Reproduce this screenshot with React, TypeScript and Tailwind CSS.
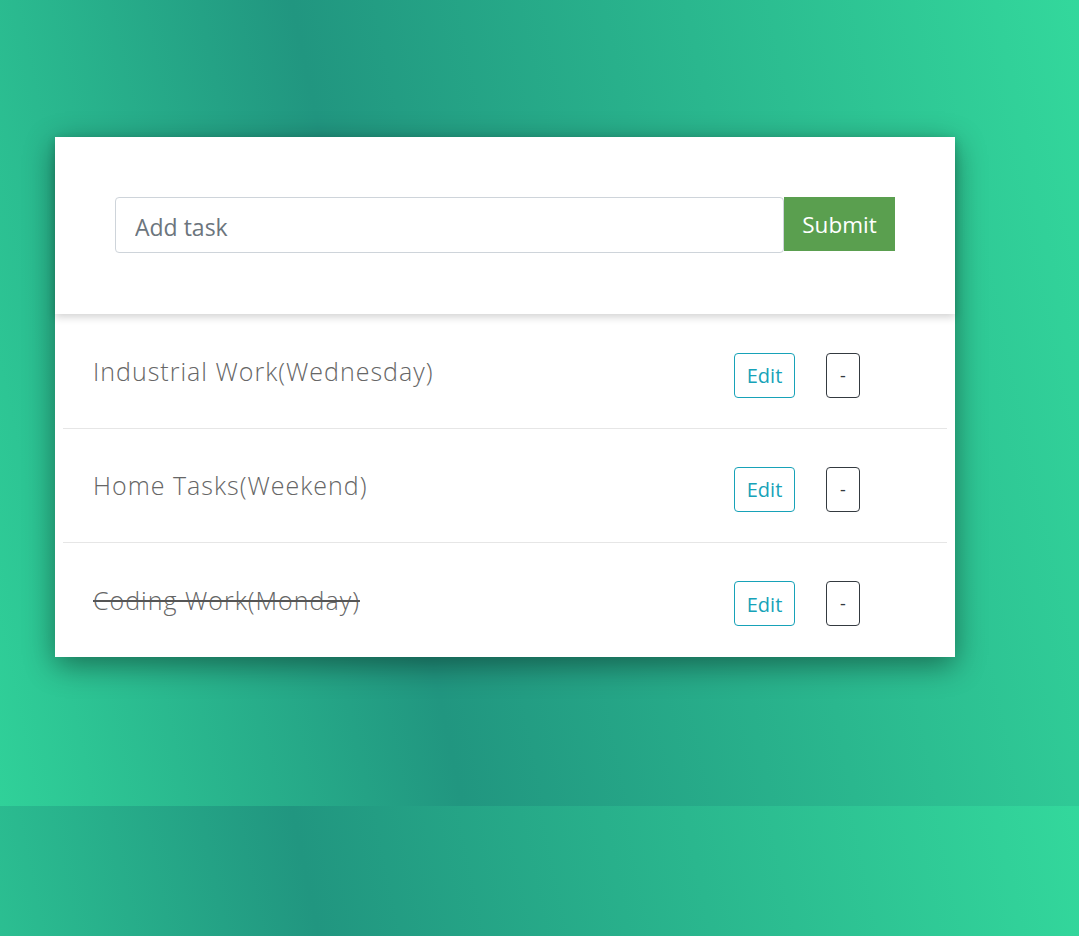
import React, { useState } from 'react';

type Task = { id: number; title: string; done: boolean };

const initialTasks: Task[] = [
  { id: 1, title: 'Industrial Work(Wednesday)', done: false },
  { id: 2, title: 'Home Tasks(Weekend)', done: false },
  { id: 3, title: 'Coding Work(Monday)', done: true },
];

const App = () => {
  const [tasks] = useState<Task[]>(initialTasks);
  const [text, setText] = useState('');

  return (
    <div className="min-h-[936px] w-full bg-[linear-gradient(78deg,#30d199_0%,#219680_37%,#33d89c_100%)] bg-[length:100%_806px] bg-repeat-y pt-[137px] pl-[55px]">
      <div className="w-[900px] bg-white shadow-[0_8px_28px_rgba(0,0,0,0.42)]">
        <div className="relative z-10 flex items-start px-[60px] pt-[60px] pb-[61px] bg-white shadow-[0_3px_8px_rgba(0,0,0,0.18)]">
          <input
            value={text}
            onChange={(e) => setText(e.target.value)}
            placeholder="Add task"
            className="flex-1 h-[56px] pt-[3px] rounded-[4px] border border-[#ced4da] px-[19px] text-[23px] text-[#495057] placeholder:text-[#6c757d] outline-none font-['Open_Sans',sans-serif]"
          />
          <button className="w-[111px] h-[54px] pt-[2px] bg-[#5a9f4f] text-white text-[22.5px] font-['Open_Sans',sans-serif]">
            Submit
          </button>
        </div>
        <ul className="pt-px">
          {tasks.map((t, i) => (
            <li key={t.id} className={`mx-2 flex items-center h-[114px] ${i < tasks.length - 1 ? 'border-b border-[#e6e6e6]' : ''}`}>
              <span className={`flex-1 pl-[30px] pt-[1px] text-[25px] font-light text-[#666] font-['Open_Sans',sans-serif] tracking-[1px] ${t.done ? 'line-through decoration-[#555]' : ''}`}>
                {t.title}
              </span>
              <button className="w-[61px] h-[45px] mt-[7px] pt-[2px] rounded-[4px] border border-[#17a2b8] text-[#17a2b8] text-[20px] font-['Open_Sans',sans-serif]">
                Edit
              </button>
              <button className="ml-[31px] mr-[87px] w-[34px] h-[45px] mt-[7px] rounded-[4px] border border-[#343a40] text-[#343a40] text-[18px] font-['Open_Sans',sans-serif]">
                -
              </button>
            </li>
          ))}
        </ul>
      </div>
    </div>
  );
};

export default App;
